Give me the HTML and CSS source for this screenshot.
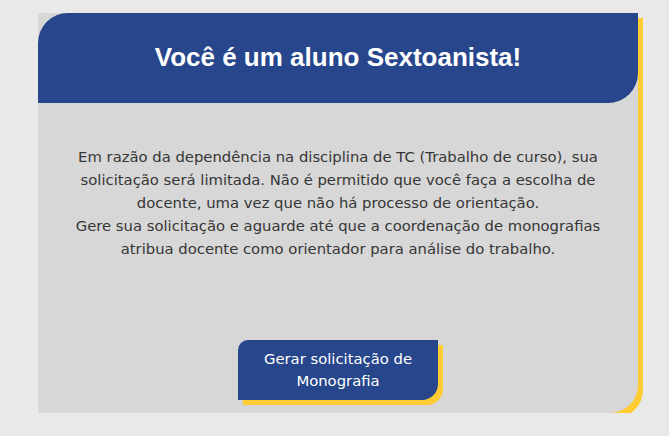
FILE: index.html
```html
<!DOCTYPE html>
<html lang="pt-BR">
<head>
    <meta charset="UTF-8">
    <meta name="viewport" content="width=device-width, initial-scale=1.0">
    <title>Solicitação de Monografia</title>
    <link rel="stylesheet" href="styles.css">
</head>
<body>
    <div class="card">
        <div class="card-header">
            <h1>Você é um aluno Sextoanista!</h1>
        </div>
        <div class="card-body">
            <p class="message">
                Em razão da dependência na disciplina de TC (Trabalho de curso), sua solicitação será limitada. Não é permitido que você faça a escolha de docente, uma vez que não há processo de orientação.<br>
                Gere sua solicitação e aguarde até que a coordenação de monografias atribua docente como orientador para análise do trabalho.
            </p>
            <button class="request-btn">Gerar solicitação de Monografia</button>
        </div>
    </div>
</body>
</html>
```

FILE: styles.css
```css
* {
    margin: 0;
    padding: 0;
    box-sizing: border-box;
}

body {
    background: #e9e9e9;
    font-family: 'DejaVu Sans', Verdana, sans-serif;
    padding: 13px 0 0 38px;
}

.card {
    width: 600px;
    height: 400px;
    background: #d7d7d7;
    border-bottom-right-radius: 28px;
    box-shadow: 5px 5px 0 #ffcc33;
    display: flex;
    flex-direction: column;
}

.card-header {
    height: 90px;
    background: #27468b;
    border-top-left-radius: 30px;
    border-bottom-right-radius: 30px;
    display: flex;
    align-items: center;
    justify-content: center;
}

.card-header h1 {
    color: #ffffff;
    font-family: 'Liberation Sans', Arial, sans-serif;
    font-weight: bold;
    font-size: 26px;
    margin-bottom: 2px;
}

.card-body {
    flex-grow: 1;
    display: flex;
    flex-direction: column;
    align-items: center;
    padding: 42px 20px 13px;
}

.message {
    max-width: 540px;
    color: #363636;
    font-size: 14.8px;
    line-height: 23px;
    text-align: center;
}

.request-btn {
    margin-top: auto;
    width: 200px;
    height: 60px;
    background: #27468b;
    color: #ffffff;
    border: none;
    border-top-left-radius: 10px;
    border-bottom-right-radius: 16px;
    box-shadow: 5px 5px 0 #ffcc33;
    font-family: 'DejaVu Sans', Verdana, sans-serif;
    font-size: 14.8px;
    line-height: 22px;
    padding: 0 16px;
    cursor: pointer;
}
```
